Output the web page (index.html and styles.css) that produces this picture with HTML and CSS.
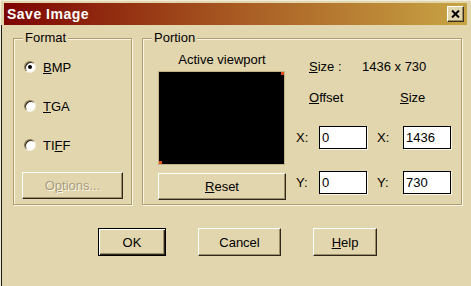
FILE: index.html
```html
<!DOCTYPE html>
<html lang="en">
<head>
    <meta charset="UTF-8">
    <title>Save Image</title>
    <link rel="stylesheet" href="styles.css">
</head>
<body>

    <div class="window">
        <div class="titlebar">
            <span class="title">Save Image</span>
            <button class="close">
                <svg width="9" height="8" viewBox="0 0 9 8">
                    <path d="M1 0.5 L8 7.5 M8 0.5 L1 7.5" stroke="#000" stroke-width="2"/>
                </svg>
            </button>
        </div>

        <div class="content">
            <div class="groups">
                <div class="group format">
                    <span class="group-title">Format</span>
                    <label class="radio"><span class="dot checked"></span><span><u>B</u>MP</span></label>
                    <label class="radio"><span class="dot"></span><span><u>T</u>GA</span></label>
                    <label class="radio"><span class="dot"></span><span>TI<u>F</u>F</span></label>
                    <button class="button options" disabled>O<u>p</u>tions...</button>
                </div>

                <div class="group portion">
                    <span class="group-title">Portion</span>
                    <div class="preview">
                        <div class="caption">Active viewport</div>
                        <div class="viewport">
                            <span class="mark top-right"></span>
                            <span class="mark bottom-left"></span>
                        </div>
                        <button class="button reset"><u>R</u>eset</button>
                    </div>
                    <div class="dims">
                        <div class="size-line">
                            <span class="size-label"><u>S</u>ize :</span>
                            <span>1436 x 730</span>
                        </div>
                        <div class="headings">
                            <span class="offset-head"><u>O</u>ffset</span>
                            <span><u>S</u>ize</span>
                        </div>
                        <div class="coord-row">
                            <span class="axis">X:</span>
                            <div class="field">0</div>
                            <span class="axis second">X:</span>
                            <div class="field">1436</div>
                        </div>
                        <div class="coord-row">
                            <span class="axis">Y:</span>
                            <div class="field">0</div>
                            <span class="axis second">Y:</span>
                            <div class="field">730</div>
                        </div>
                    </div>
                </div>
            </div>

            <div class="actions">
                <button class="button default ok">OK</button>
                <button class="button cancel">Cancel</button>
                <button class="button help"><u>H</u>elp</button>
            </div>
        </div>
    </div>

</body>
</html>
```

FILE: styles.css
```css
body {
    margin: 0;
    background-color: #e2d6ae;
    font-family: "Liberation Sans", Arial, sans-serif;
    font-size: 13px;
    color: #000;
}

.window {
    width: 471px;
    height: 286px;
    overflow: hidden;
    box-shadow: inset 1px 1px 0 #f2ecd8;
}

.titlebar {
    margin: 3px 4px 0 4px;
    height: 22px;
    display: flex;
    align-items: center;
    justify-content: space-between;
    background: linear-gradient(to right, #7e0400, #a85a22 50%, #c8a444);
}

.title {
    color: #fff;
    font-weight: bold;
    font-size: 14px;
    letter-spacing: 0.5px;
    padding-left: 3px;
}

.close {
    width: 17px;
    height: 16px;
    margin-right: 3px;
    padding: 0;
    display: flex;
    align-items: center;
    justify-content: center;
    background-color: #e2d6ae;
    border: 1px solid;
    border-color: #fff #3a3020 #3a3020 #fff;
    box-shadow: inset -1px -1px 0 #9c8e68;
}

.content {
    height: 261px;
    padding-top: 13px;
    box-sizing: border-box;
    box-shadow: inset 1px 0 0 #f2ecd8, inset 2px 0 0 #1a1a1a;
}

.groups {
    display: flex;
    padding-left: 13px;
    gap: 10px;
}

.group {
    position: relative;
    height: 167px;
    box-sizing: border-box;
    border: 1px solid #b09c6c;
    box-shadow: inset 1px 1px 0 #fbf6e6, 1px 1px 0 #fbf6e6;
}

.group-title {
    position: absolute;
    top: -8px;
    left: 9px;
    padding: 0 2px;
    line-height: 14px;
    background-color: #e2d6ae;
}

/* Format box */

.format {
    width: 119px;
    display: flex;
    flex-direction: column;
    padding-top: 15px;
}

.radio {
    display: flex;
    align-items: center;
    height: 26px;
    margin-bottom: 13px;
    padding-left: 10px;
    gap: 7px;
}

.dot {
    position: relative;
    width: 12px;
    height: 12px;
    box-sizing: border-box;
    border-radius: 50%;
    background-color: #fff;
    border: 1px solid;
    border-color: #8c7c54 #f4eedc #f4eedc #8c7c54;
    box-shadow: inset 1px 1px 0 #2c2414;
}

.dot.checked::after {
    content: "";
    position: absolute;
    left: 3px;
    top: 3px;
    width: 4px;
    height: 4px;
    border-radius: 50%;
    background-color: #000;
}

.button {
    font-family: "Liberation Sans", Arial, sans-serif;
    font-size: 13px;
    color: #000;
    padding: 0;
    background-color: #e2d6ae;
    border: 1px solid;
    border-color: #fff #2e2618 #2e2618 #fff;
    box-shadow: inset -1px -1px 0 #9c8e68;
    box-sizing: border-box;
}

.options {
    width: 101px;
    height: 27px;
    margin: 1px 0 0 8px;
    color: #a89c7e;
    text-shadow: 1px 1px 0 #fbf6e6;
}

/* Portion box */

.portion {
    width: 320px;
    display: flex;
    padding-top: 14px;
}

.preview {
    width: 128px;
    margin-left: 15px;
    display: flex;
    flex-direction: column;
}

.caption {
    text-align: center;
    line-height: 14px;
}

.viewport {
    position: relative;
    width: 127px;
    height: 94px;
    margin-top: 4px;
    box-sizing: border-box;
    background-color: #000;
    border: 1px solid #c4b284;
}

.mark {
    position: absolute;
    width: 3px;
    height: 3px;
    background-color: #e0501c;
}

.mark.top-right {
    top: 0;
    right: 0;
}

.mark.bottom-left {
    bottom: 0;
    left: 0;
}

.reset {
    width: 128px;
    height: 27px;
    margin-top: 8px;
}

.dims {
    margin-left: 10px;
    display: flex;
    flex-direction: column;
}

.size-line {
    display: flex;
    margin-top: 7px;
    padding-left: 13px;
    line-height: 14px;
}

.size-label {
    width: 53px;
}

.headings {
    display: flex;
    margin-top: 17px;
    padding-left: 13px;
    line-height: 14px;
}

.offset-head {
    width: 91px;
}

.coord-row {
    display: flex;
    align-items: center;
    margin-top: 21px;
}

.coord-row + .coord-row {
    margin-top: 22px;
}

.axis {
    width: 23px;
}

.axis.second {
    width: 26px;
    padding-left: 10px;
}

.field {
    width: 48px;
    height: 23px;
    box-sizing: border-box;
    background-color: #fff;
    border: 1px solid #000;
    box-shadow: 1px 1px 0 #fbf6e6;
    padding-left: 2px;
    line-height: 21px;
}

/* Dialog buttons */

.actions {
    display: flex;
    gap: 32px;
    margin: 23px 0 0 98px;
}

.actions .button {
    height: 28px;
}

.ok {
    width: 68px;
}

.cancel {
    width: 83px;
}

.help {
    width: 64px;
}

.button.default {
    border: 1px solid #000;
    box-shadow: inset 1px 1px 0 #fff, inset -1px -1px 0 #2e2618, inset -2px -2px 0 #9c8e68;
}
```
